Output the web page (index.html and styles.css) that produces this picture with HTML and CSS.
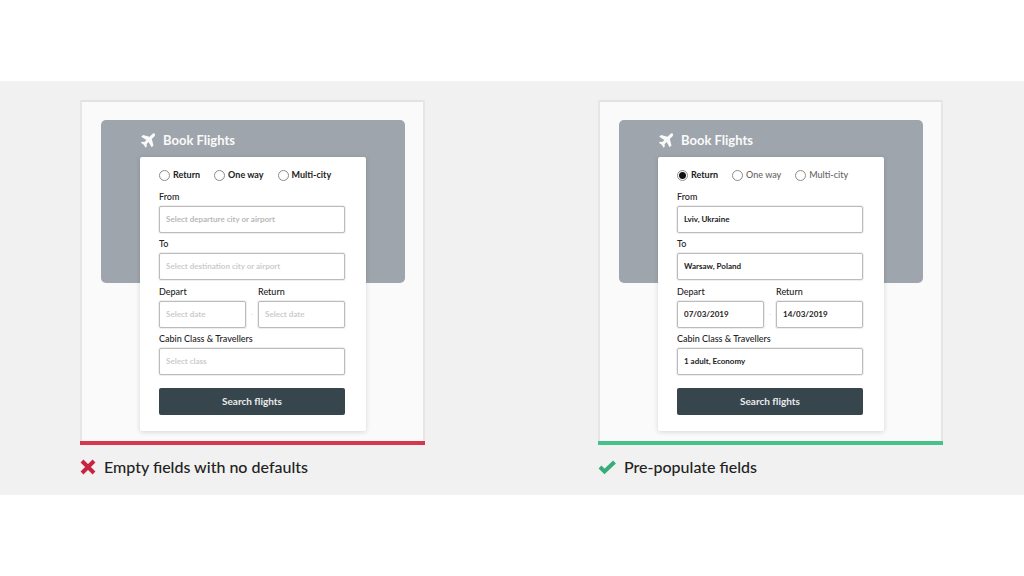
FILE: index.html
```html
<!DOCTYPE html>
<html lang="en">
<head>
<meta charset="utf-8">
<meta name="viewport" content="width=device-width, initial-scale=1">
<title>Form defaults</title>
<link rel="stylesheet" href="styles.css">
</head>
<body>
<main class="comparison">
  <section class="example">
    <div class="frame frame-bad">
      <header class="hero">
        <svg class="plane" viewBox="0 0 24 24" aria-hidden="true"><path transform="rotate(45 12 12)" d="M12-2C10.500-2 9.500-.8 9.500.8V7L.2 12.500v4.200l9.300-2.400v4.600L6.600 21.200v2.700l5.400-1.200 5.400 1.200v-2.700l-2.900-2.300v-4.600l9.300 2.400v-4.200L14.500 7V.8C14.500-.8 13.500-2 12-2z"/></svg>
        <h2 class="hero-title">Book Flights</h2>
      </header>
      <form class="card">
        <div class="trips">
          <label class="trip"><input class="radio" type="radio" name="trip-a">Return</label>
          <label class="trip"><input class="radio" type="radio" name="trip-a">One way</label>
          <label class="trip"><input class="radio" type="radio" name="trip-a">Multi-city</label>
        </div>
        <div class="field"><label class="label" for="from-a">From</label><input class="input" id="from-a" type="text" placeholder="Select departure city or airport"></div>
        <div class="field"><label class="label" for="to-a">To</label><input class="input faint" id="to-a" type="text" placeholder="Select destination city or airport"></div>
        <div class="dates">
          <div class="field"><label class="label" for="dep-a">Depart</label><input class="input faint" id="dep-a" type="text" placeholder="Select date"></div>
          <span class="dash">-</span>
          <div class="field"><label class="label" for="ret-a">Return</label><input class="input faint" id="ret-a" type="text" placeholder="Select date"></div>
        </div>
        <div class="field"><label class="label" for="class-a">Cabin Class &amp; Travellers</label><input class="input faint" id="class-a" type="text" placeholder="Select class"></div>
        <button class="submit" type="button">Search flights</button>
      </form>
    </div>
    <p class="caption">
      <svg class="mark cross" viewBox="0 0 16 16" aria-hidden="true"><path d="M2 2l12 12M14 2l-12 12"/></svg>
      Empty fields with no defaults
    </p>
  </section>
  <section class="example">
    <div class="frame frame-good">
      <header class="hero">
        <svg class="plane" viewBox="0 0 24 24" aria-hidden="true"><path transform="rotate(45 12 12)" d="M12-2C10.500-2 9.500-.8 9.500.8V7L.2 12.500v4.200l9.300-2.400v4.600L6.600 21.200v2.700l5.400-1.200 5.400 1.200v-2.700l-2.900-2.300v-4.600l9.300 2.400v-4.200L14.500 7V.8C14.500-.8 13.500-2 12-2z"/></svg>
        <h2 class="hero-title">Book Flights</h2>
      </header>
      <form class="card">
        <div class="trips">
          <label class="trip"><input class="radio" type="radio" name="trip-b" checked>Return</label>
          <label class="trip trip-muted"><input class="radio" type="radio" name="trip-b">One way</label>
          <label class="trip trip-muted"><input class="radio" type="radio" name="trip-b">Multi-city</label>
        </div>
        <div class="field"><label class="label" for="from-b">From</label><input class="input" id="from-b" type="text" value="Lviv, Ukraine"></div>
        <div class="field"><label class="label" for="to-b">To</label><input class="input" id="to-b" type="text" value="Warsaw, Poland"></div>
        <div class="dates">
          <div class="field"><label class="label" for="dep-b">Depart</label><input class="input" id="dep-b" type="text" value="07/03/2019"></div>
          <span class="dash">-</span>
          <div class="field"><label class="label" for="ret-b">Return</label><input class="input" id="ret-b" type="text" value="14/03/2019"></div>
        </div>
        <div class="field"><label class="label" for="class-b">Cabin Class &amp; Travellers</label><input class="input" id="class-b" type="text" value="1 adult, Economy"></div>
        <button class="submit" type="button">Search flights</button>
      </form>
    </div>
    <p class="caption">
      <svg class="mark check" viewBox="0 0 18 16" aria-hidden="true"><path d="M2 8l4.500 4.500L16.500 3"/></svg>
      Pre-populate fields
    </p>
  </section>
</main>
</body>
</html>
```
FILE: styles.css
```css
* { box-sizing: border-box; }
body {
  margin: 0;
  min-height: 100vh;
  display: flex;
  align-items: center;
  background: #fff;
  color: #222;
  font-family: Lato, "Open Sans", sans-serif;
}
.comparison {
  flex: 1;
  display: grid;
  grid-template-columns: 1fr 1fr;
  column-gap: 173px;
  padding: 19px 81px 0 80px;
  background: #f1f1f1;
}
.frame {
  padding: 20px 20px 10px 21px;
  background: #fafafa;
  border-bottom: 4px solid;
  box-shadow: inset 2px 0 #e6e6e6, inset -2px 0 #e6e6e6, inset 0 2px #e2e2e2;
}
.frame-bad { border-bottom-color: #d83550; }
.frame-good { border-bottom-color: #47c08c; }
.hero {
  display: flex;
  align-items: flex-start;
  gap: 7px;
  height: 163px;
  padding: 10px 40px;
  border-radius: 5px;
  background: #9fa5ac;
  color: #fafafa;
}
.plane { width: 15px; height: 20px; fill: currentColor; overflow: visible; }
.hero-title { margin: 0; font-size: 13px; line-height: 20px; font-weight: 700; }
.card {
  margin: -126px 39px 0;
  padding: 10px 21px 16px 19px;
  border-radius: 2px;
  background: #fff;
  box-shadow: 0 1px 5px rgba(0, 0, 0, 0.15);
  display: flex;
  flex-direction: column;
  gap: 5px;
}
.trips { display: flex; gap: 14px; margin-bottom: 3px; }
.trip {
  display: flex;
  align-items: center;
  gap: 3px;
  font-size: 9px;
  line-height: 16px;
  font-weight: 700;
  white-space: nowrap;
}
.trip-muted { color: #666; font-weight: 500; }
.radio {
  appearance: none;
  width: 11px;
  height: 11px;
  margin: 0;
  border: 1px solid #8c8c8c;
  border-radius: 50%;
  background: #fff;
}
.radio:checked { background: radial-gradient(circle, #111 3px, #fff 4px); }
.field { display: flex; flex-direction: column; gap: 3px; min-width: 0; }
.label { font-size: 9px; line-height: 12px; font-weight: 500; }
.input {
  width: 100%;
  height: 27px;
  padding: 0 6px 2px;
  border: 1px solid #bcbcbc;
  border-radius: 2px;
  background: #fff;
  box-shadow: 0 0 0 1px #eeeeee;
  color: #222;
  font: 700 8px/12px Lato, "Open Sans", sans-serif;
}
.input::placeholder { color: #b8b8b8; opacity: 1; }
.faint::placeholder { color: #cccccc; }
.dates {
  display: grid;
  grid-template-columns: 1fr 12px 1fr;
  align-items: end;
  margin-top: 1px;
}
.dash { font-size: 8px; line-height: 27px; text-align: center; color: #ddd; }
.submit {
  height: 27px;
  margin-top: 8px;
  padding: 0;
  border: 0;
  border-radius: 2px;
  background: #37454d;
  color: #e9eced;
  font: 700 10px/27px Lato, "Open Sans", sans-serif;
}
.caption {
  display: flex;
  align-items: center;
  gap: 8px;
  height: 50px;
  margin: 0;
  padding-bottom: 6px;
  font-size: 16px;
  line-height: 24px;
  font-weight: 500;
}
.mark { flex: none; height: 16px; fill: none; stroke-width: 4; }
.cross { width: 16px; stroke: #c8233f; }
.check { width: 18px; stroke: #34ad7b; }
```
